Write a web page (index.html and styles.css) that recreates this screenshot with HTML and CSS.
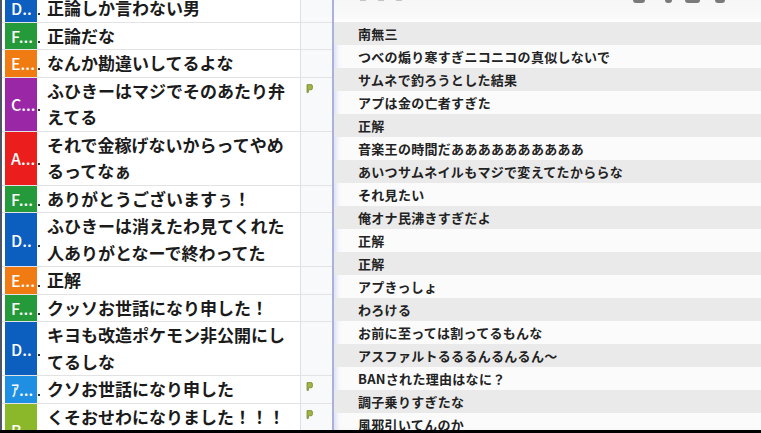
FILE: index.html
```html
<!DOCTYPE html>
<html lang="ja">
<head>
  <meta charset="UTF-8">
  <title>コメント</title>
  <link rel="stylesheet" href="styles.css">
</head>
<body>
  <div class="screen">
    <section class="comments">
      <ul class="comment-list">
        <li class="comment"><span class="badge blue">D..</span><p>正論しか言わない男</p><span class="flag-cell"></span></li>
        <li class="comment"><span class="badge green">F...</span><p>正論だな</p><span class="flag-cell"></span></li>
        <li class="comment"><span class="badge orange">E...</span><p>なんか勘違いしてるよな</p><span class="flag-cell"></span></li>
        <li class="comment"><span class="badge purple">C...</span><p>ふひきーはマジでそのあたり弁えてる</p><span class="flag-cell"><svg class="flag" viewBox="0 0 7 9"><path d="M1 0.6h4a1.4 1.4 0 0 1 1.4 1.4v2.4a1.4 1.4 0 0 1-1.4 1.4H2.4V8.4H1z"/></svg></span></li>
        <li class="comment"><span class="badge red">A...</span><p>それで金稼げないからってやめるってなぁ</p><span class="flag-cell"></span></li>
        <li class="comment"><span class="badge green">F...</span><p>ありがとうございますぅ！</p><span class="flag-cell"></span></li>
        <li class="comment"><span class="badge blue">D..</span><p>ふひきーは消えたわ見てくれた人ありがとなーで終わってた</p><span class="flag-cell"></span></li>
        <li class="comment"><span class="badge orange">E...</span><p>正解</p><span class="flag-cell"></span></li>
        <li class="comment"><span class="badge green">F...</span><p>クッソお世話になり申した！</p><span class="flag-cell"></span></li>
        <li class="comment"><span class="badge blue">D..</span><p>キヨも改造ポケモン非公開にしてるしな</p><span class="flag-cell"></span></li>
        <li class="comment"><span class="badge sky">ｱ...</span><p>クソお世話になり申した</p><span class="flag-cell"><svg class="flag" viewBox="0 0 7 9"><path d="M1 0.6h4a1.4 1.4 0 0 1 1.4 1.4v2.4a1.4 1.4 0 0 1-1.4 1.4H2.4V8.4H1z"/></svg></span></li>
        <li class="comment tall"><span class="badge lime">B...</span><p>くそおせわになりました！！！</p><span class="flag-cell"><svg class="flag" viewBox="0 0 7 9"><path d="M1 0.6h4a1.4 1.4 0 0 1 1.4 1.4v2.4a1.4 1.4 0 0 1-1.4 1.4H2.4V8.4H1z"/></svg></span></li>
      </ul>
    </section>

    <section class="chat">
      <div class="chat-head">
        <div class="head-marks"><span></span><span></span><span></span></div>
        <div class="head-icons"><span class="i1"></span><span class="i2"></span><span class="i3"></span><span class="i4"></span></div>
      </div>
      <ul class="chat-list">
        <li>南無三</li>
        <li>つべの煽り寒すぎニコニコの真似しないで</li>
        <li>サムネで釣ろうとした結果</li>
        <li>アプは金の亡者すぎた</li>
        <li>正解</li>
        <li>音楽王の時間だああああああああああ</li>
        <li>あいつサムネイルもマジで変えてたかららな</li>
        <li>それ見たい</li>
        <li>俺オナ民沸きすぎだよ</li>
        <li>正解</li>
        <li>正解</li>
        <li>アプきっしょ</li>
        <li>わろける</li>
        <li>お前に至っては割ってるもんな</li>
        <li>アスファルトるるるんるんるん～</li>
        <li>BANされた理由はなに？</li>
        <li>調子乗りすぎたな</li>
        <li>風邪引いてんのか</li>
      </ul>
    </section>
  </div>
  <div class="bottom-bar"></div>
</body>
</html>
```

FILE: styles.css
```css
* {
  box-sizing: border-box;
}

body {
  margin: 0;
  font-family: "Noto Sans CJK JP", "Noto Sans", sans-serif;
  background: #000;
  overflow: hidden;
}

.screen {
  display: flex;
  height: 430px;
  overflow: hidden;
  background: #fff;
}

/* left: comment list */
.comments {
  width: 334px;
  flex-shrink: 0;
  border-left: 2px solid #4d5566;
  border-right: 2px solid #aab1dc;
  background: #fff;
  overflow: hidden;
}

.comment-list {
  list-style: none;
  margin: -5px 0 0;
  padding: 0;
}

.comment {
  display: flex;
  border-bottom: 1px solid #e3e3e6;
}

.comment.tall {
  min-height: 54px;
}

.badge {
  position: relative;
  width: 32px;
  margin-left: 3px;
  flex-shrink: 0;
  display: flex;
  align-items: center;
  padding-left: 6px;
  color: #fff;
  font-size: 16px;
  font-weight: 500;
  white-space: nowrap;
}

.badge::after {
  content: "";
  position: absolute;
  right: -3px;
  top: 50%;
  margin-top: 5px;
  width: 2px;
  height: 2px;
  background: #333;
}

.blue { background: #0d5fbf; }
.green { background: #259a3a; }
.orange { background: #f07b12; }
.purple { background: #9a27a6; }
.red { background: #ec1d1d; }
.sky { background: #1e8fe2; }
.lime { background: #8bb82b; }

.comment p {
  margin: 0 0 0 10px;
  width: 253px;
  font-size: 17px;
  line-height: 26.5px;
  font-weight: 700;
  color: #1b1b1b;
}

.flag-cell {
  width: 32px;
  flex-shrink: 0;
  border-left: 1px solid #dde0e8;
  background: #f8f9fb;
  padding: 6px 0 0 5px;
}

.flag {
  display: block;
  width: 7px;
  height: 9px;
}

.flag path {
  fill: #a3b443;
  stroke: #6e7d28;
  stroke-width: 0.7;
}

/* right: chat log */
.chat {
  flex: 1;
  background: #fbfbfb;
  box-shadow: inset 5px 0 5px -3px rgba(150, 160, 220, 0.35);
}

.chat-head {
  height: 22px;
  display: flex;
  justify-content: space-between;
  background: linear-gradient(#f6f6f6, #fafafa 80%, #fff);
}

.head-marks {
  display: flex;
  gap: 12px;
  padding-left: 26px;
}

.head-marks span {
  width: 6px;
  height: 1px;
  background: #c4c4c4;
}

.head-icons {
  display: flex;
  padding-right: 36px;
}

.head-icons span {
  height: 3px;
  background: #7a7a7a;
  border-radius: 0 0 3px 3px;
}

.head-icons .i1 { width: 12px; margin-right: 20px; }
.head-icons .i2 { width: 7px; margin-right: 13px; }
.head-icons .i3 { width: 15px; margin-right: 15px; }
.head-icons .i4 { width: 10px; }

.chat-list {
  list-style: none;
  margin: 0;
  padding: 0;
}

.chat-list li {
  height: 23px;
  line-height: 23px;
  padding-left: 24px;
  font-size: 13px;
  font-weight: 700;
  letter-spacing: 0.3px;
  color: #222;
  white-space: nowrap;
}

.chat-list li:nth-child(odd) {
  background: #eaeaea;
}

.bottom-bar {
  height: 3px;
  background: #000;
}
```
